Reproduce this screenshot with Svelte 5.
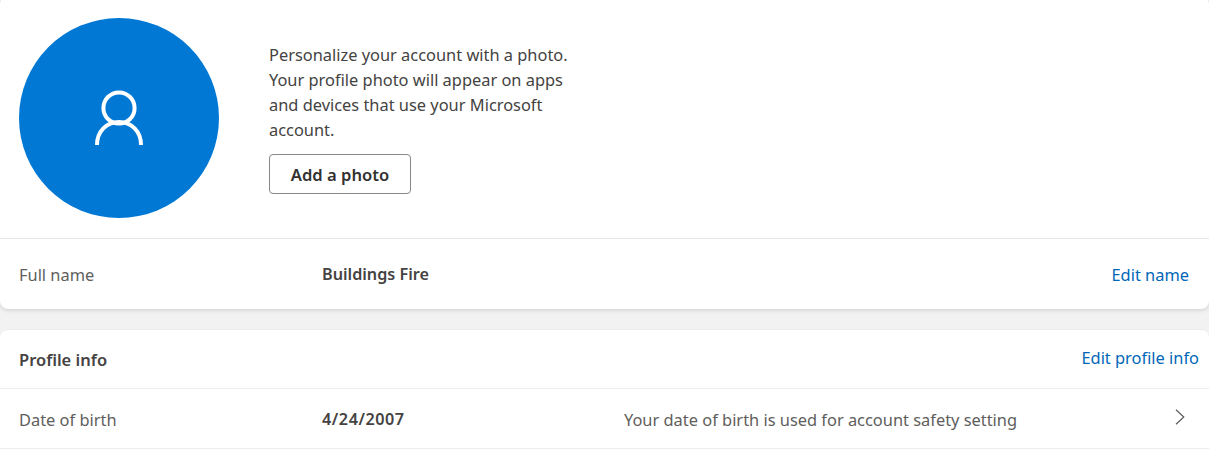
<script>
  const intro = ["Personalize your account with a photo.", "Your profile photo will appear on apps", "and devices that use your Microsoft", "account."];
</script>

<main class="page">
  <section class="card first">
    <div class="photo">
      <div class="avatar">
        <svg width="50" height="56" viewBox="0 0 50 56" fill="none" stroke="#fff" stroke-width="4">
          <circle cx="25" cy="18" r="15.6" />
          <path d="M3 55C3 41.5 12.5 32 25 32s22 9.5 22 23" />
        </svg>
      </div>
      <div class="intro">
        <p>{#each intro as line}<span>{line}</span>{/each}</p>
        <button>Add a photo</button>
      </div>
    </div>
    <div class="row name">
      <span class="label">Full name</span>
      <span class="value">Buildings Fire</span>
      <a href="#name" class="edit">Edit name</a>
    </div>
  </section>

  <section class="card second">
    <div class="head">
      <h2>Profile info</h2>
      <a href="#info">Edit profile info</a>
    </div>
    <div class="row birth">
      <span class="label">Date of birth</span>
      <span class="value">4/24/2007</span>
      <span class="note">Your date of birth is used for account safety setting</span>
      <svg class="chev" width="10" height="16" viewBox="0 0 10 16" fill="none" stroke="#5c5c5c" stroke-width="1.2"><path d="M1 .8 8.8 8 1 15.2" /></svg>
    </div>
  </section>
</main>

<style>
  :global(body) { margin: 0; background: #f2f2f2; overflow: hidden; }
  .page { width: 1209px; height: 449px; overflow: hidden; font: 16.4px/25px "Noto Sans", "Open Sans", sans-serif; color: #444342; }
  .card { background: #fff; border-radius: 8px; }
  .first { margin-top: -4px; height: 313px; box-shadow: 0 1px 4px rgba(0,0,0,.16); }
  .second { margin-top: 20px; height: 200px; border-top: 1px solid #ececec; box-sizing: border-box; }
  .photo { height: 243px; box-sizing: border-box; padding: 22px 0 0 19px; display: flex; gap: 50px; border-bottom: 1px solid #e6e6e6; }
  .avatar { width: 200px; height: 200px; border-radius: 50%; background: #0078d4; display: flex; align-items: center; justify-content: center; flex: none; }
  .intro { padding-top: 24px; }
  p { margin: 0 0 12px; }
  p span { display: block; }
  button { width: 142px; height: 40px; font: 600 16.6px "Noto Sans", sans-serif; color: #323130; background: #fff; border: 1px solid #8a8886; border-radius: 4px; padding: 0; display: block; }
  .row { display: flex; align-items: center; padding-left: 19px; box-sizing: border-box; }
  .name { height: 70px; padding: 1px 20px 0 19px; }
  .label { width: 303px; color: #605e5c; flex: none; }
  .value { font-weight: 600; font-size: 16.2px; }
  .name .edit { margin-left: auto; }
  a { color: #0067b8; text-decoration: none; }
  .head { height: 59px; box-sizing: border-box; display: flex; align-items: center; justify-content: space-between; padding: 0 10px 0 19px; border-bottom: 1px solid #ececec; }
  .head a { margin-top: -3px; }
  h2 { margin: 0; font-size: 16.5px; font-weight: 600; }
  .birth { height: 60px; padding-top: 2px; border-bottom: 1px solid #ececec; }
  .birth .value { width: 302px; flex: none; letter-spacing: .55px; }
  .note { color: #605e5c; }
  .chev { margin-left: auto; margin-right: 24px; margin-top: -5px; }
</style>
